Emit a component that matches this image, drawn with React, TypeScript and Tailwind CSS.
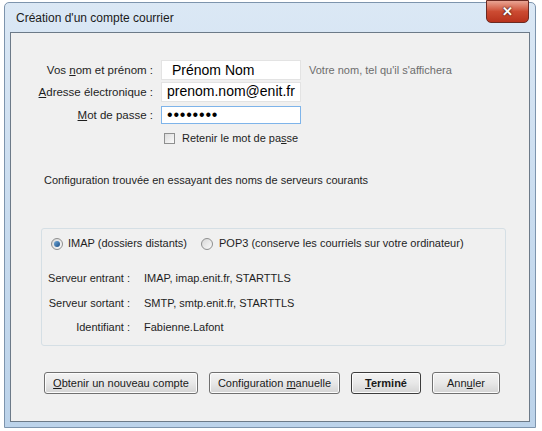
import React from "react";

function Btn({ children, bold, w }: { children: React.ReactNode; bold?: boolean; w: string }) {
  return (
    <div
      className={`${w} h-[22px] flex items-center justify-center rounded-[3px] border ${
        bold ? "border-[#3c3c3c]" : "border-[#707070]"
      } bg-gradient-to-b from-[#f3f3f3] via-[#e8e8e8] to-[#d4d4d4] shadow-[inset_0_0_0_1px_#fcfcfc] text-[11px] text-[#1a1a1a] ${
        bold ? "font-bold" : ""
      }`}
    >
      {children}
    </div>
  );
}

function Radio({ checked }: { checked?: boolean }) {
  return (
    <div className="w-[12px] h-[12px] rounded-full border border-[#8e8f8f] bg-gradient-to-br from-[#d8d8d8] to-[#fafafa] flex items-center justify-center">
      {checked && <div className="w-[6px] h-[6px] rounded-full bg-gradient-to-br from-[#6fa8d8] to-[#1c4f86]" />}
    </div>
  );
}

export default function App() {
  return (
    <div className="w-[542px] h-[431px] bg-white overflow-hidden pt-[2px] pl-[4px] font-['Liberation_Sans',sans-serif] text-[#1e1e1e]">
      <div className="relative w-[532px] h-[426px] border border-[#7d94ad] rounded-t-[5px] bg-gradient-to-b from-[#dbe8f5] via-[#c9dcef] to-[#bcd3ea] flex flex-col px-[5px] pb-[5px]">
        {/* title bar */}
        <div className="h-[29px] shrink-0 flex items-center pl-[6px] text-[12px] text-[#1b1b1b]">
          Création d'un compte courrier
        </div>
        <div className="absolute right-[6px] top-[-3px] w-[43px] h-[23px] rounded-b-[5px] border border-[#6b2a22] bg-gradient-to-b from-[#e8a493] via-[#cc4b32] to-[#b8321c] flex items-center justify-center">
          <span className="text-white font-bold text-[13px] leading-none [text-shadow:0_0_2px_#000]">✕</span>
        </div>

        {/* client panel */}
        <div className="flex-1 border border-[#6c7a88] bg-[#f0f0f0] flex flex-col text-[11px] leading-[13px]">
          {/* form */}
          <div className="mt-[27px] grid grid-cols-[142px_140px_1fr] gap-x-[8px] items-center">
            <div className="text-right text-[11.5px]">
              Vos <span className="underline">n</span>om et prénom :
            </div>
            <div className="h-[20px] bg-white border border-[#e3e3e3] pl-[10px] text-[14px] leading-[18px] text-black overflow-hidden">
              Prénom Nom
            </div>
            <div className="text-[#6d6d6d] text-[11px]">Votre nom, tel qu'il s'affichera</div>

            <div className="text-right mt-[2px] text-[11.5px]">
              <span className="underline">A</span>dresse électronique :
            </div>
            <div className="h-[20px] mt-[2px] bg-white border border-[#e3e3e3] pl-[5px] text-[14px] leading-[17px] text-black">
              prenom.nom@enit.fr
            </div>
            <div />

            <div className="text-right mt-[4px] text-[11.5px]">
              <span className="underline">M</span>ot de passe :
            </div>
            <div className="h-[18px] mt-[4px] bg-white border border-[#7eb4ea] pl-[5px] text-[16px] leading-[16px] tracking-[0.8px] text-black">
              ••••••••
            </div>
            <div />

            <div />
            <div className="mt-[8px] flex items-center gap-[7px] pl-[3px]">
              <div className="w-[11px] h-[11px] border border-[#8e8f8f] bg-gradient-to-br from-[#dcdcdc] to-[#fbfbfb]" />
              <span>
                Retenir le mot de pa<span className="underline">s</span>se
              </span>
            </div>
            <div />
          </div>

          {/* status */}
          <div className="mt-[29px] pl-[33px]">Configuration trouvée en essayant des noms de serveurs courants</div>

          {/* group */}
          <div className="mt-[41px] ml-[30px] w-[465px] border border-[#d5dfe5] rounded-[3px] flex flex-col pb-[11px]">
            <div className="mt-[8px] pl-[9px] flex items-center">
              <Radio checked />
              <span className="ml-[5px]">IMAP (dossiers distants)</span>
              <div className="ml-[14px]">
                <Radio />
              </div>
              <span className="ml-[6px]">POP3 (conserve les courriels sur votre ordinateur)</span>
            </div>
            <div className="mt-[22px] grid grid-cols-[88px_1fr] gap-x-[14px] gap-y-[11.5px] whitespace-nowrap">
              <div className="text-right">Serveur entrant :</div>
              <div>IMAP, imap.enit.fr, STARTTLS</div>
              <div className="text-right">Serveur sortant :</div>
              <div>SMTP, smtp.enit.fr, STARTTLS</div>
              <div className="text-right">Identifiant :</div>
              <div>Fabienne.Lafont</div>
            </div>
          </div>

          {/* buttons */}
          <div className="mt-[26px] pl-[33px] flex gap-[11px]">
            <Btn w="w-[154px]">
              <span>
                <span className="underline">O</span>btenir un nouveau compte
              </span>
            </Btn>
            <Btn w="w-[131px]">
              <span>
                Configuration <span className="underline">m</span>anuelle
              </span>
            </Btn>
            <Btn w="w-[70px]" bold>
              <span>
                <span className="underline">T</span>erminé
              </span>
            </Btn>
            <Btn w="w-[68px]">
              <span>
                Ann<span className="underline">u</span>ler
              </span>
            </Btn>
          </div>
        </div>
      </div>
    </div>
  );
}
